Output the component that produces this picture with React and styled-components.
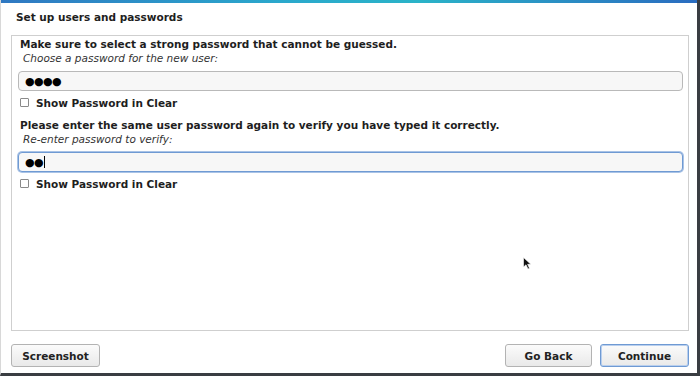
import styled, { createGlobalStyle } from "styled-components";

const GlobalStyle = createGlobalStyle`
  html, body {
    margin: 0;
    padding: 0;
    background: #ffffff;
  }
  body {
    font-family: "DejaVu Sans", "Liberation Sans", sans-serif;
    color: #1e1e1e;
  }
`;

const Window = styled.div`
  position: relative;
  box-sizing: border-box;
  width: 700px;
  height: 376px;
  display: flex;
  flex-direction: column;
  background: #ffffff;
  border-left: 1px solid #d8d8d8;
  border-right: 3px solid #3a3d42;
  border-bottom: 3px solid #3a3d42;
  &::before {
    content: "";
    display: block;
    height: 3px;
    background: linear-gradient(90deg, #2f78c2 0%, #2aa8cc 40%, #2ab3c8 60%, #2a6cc0 100%);
  }
`;

const Title = styled.h1`
  margin: 0;
  padding: 8px 0 0 15px;
  height: 24px;
  font-size: 10.5px;
  font-weight: bold;
  line-height: 13px;
`;

const Panel = styled.section`
  flex: 1;
  margin: 0 8px 0 10px;
  border: 1px solid #cfcfcf;
  padding: 2px 5px 0 6px;
  display: flex;
  flex-direction: column;
`;

const Heading = styled.div`
  font-size: 10.5px;
  font-weight: bold;
  line-height: 13px;
  padding-left: 2px;
  margin-top: ${(p) => p.$top || 0}px;
`;

const Hint = styled.div`
  font-size: 10.5px;
  font-style: italic;
  line-height: 13px;
  color: #333;
  padding: 1px 0 0 5px;
  margin-bottom: 6px;
`;

const Field = styled.div`
  box-sizing: border-box;
  height: 20px;
  border: 1px solid ${(p) => (p.$focus ? "#6f9ad3" : "#b9b9b9")};
  box-shadow: ${(p) => (p.$focus ? "0 0 0 1px #a9c3e6" : "none")};
  border-radius: 4px;
  background: #f7f7f7;
  display: flex;
  align-items: center;
  padding-left: 6px;
  font-size: 11px;
  letter-spacing: -0.6px;
  color: #000;
`;

const Caret = styled.span`
  display: inline-block;
  width: 1px;
  height: 12px;
  margin-left: 1px;
  background: #000;
`;

const CheckRow = styled.label`
  display: flex;
  align-items: center;
  gap: 7px;
  height: 21px;
  margin-top: 1px;
  padding-left: 2px;
  font-size: 10.5px;
  font-weight: bold;
`;

const Box = styled.span`
  box-sizing: border-box;
  width: 9px;
  height: 9px;
  border: 1px solid #8a8a8a;
  border-radius: 1px;
  background: #fff;
`;

const Footer = styled.footer`
  box-sizing: border-box;
  height: 42px;
  display: flex;
  align-items: flex-end;
  padding: 0 8px 6px 10px;
  gap: 8px;
`;

const Spacer = styled.div`
  flex: 1;
`;

const Button = styled.button`
  box-sizing: border-box;
  width: ${(p) => p.$w}px;
  height: 23px;
  border: 1px solid ${(p) => (p.$focus ? "#6f9ad3" : "#b3b3b3")};
  box-shadow: ${(p) => (p.$focus ? "inset 0 0 0 1px #b9cfee" : "none")};
  border-radius: 3px;
  background: linear-gradient(#fbfbfb, #e9e9e9);
  font-family: "DejaVu Sans", "Liberation Sans", sans-serif;
  font-size: 10.5px;
  font-weight: bold;
  color: #222;
  padding: 0;
`;

const Pointer = styled.svg`
  position: absolute;
  left: 522px;
  top: 257px;
`;

export default function App() {
  return (
    <>
      <GlobalStyle />
      <Window>
        <Title>Set up users and passwords</Title>
        <Panel>
          <Heading>Make sure to select a strong password that cannot be guessed.</Heading>
          <Hint>Choose a password for the new user:</Hint>
          <Field>●●●●</Field>
          <CheckRow>
            <Box />
            Show Password in Clear
          </CheckRow>
          <Heading $top={6}>
            Please enter the same user password again to verify you have typed it correctly.
          </Heading>
          <Hint>Re-enter password to verify:</Hint>
          <Field $focus>
            ●●
            <Caret />
          </Field>
          <CheckRow>
            <Box />
            Show Password in Clear
          </CheckRow>
        </Panel>
        <Footer>
          <Button $w={89}>Screenshot</Button>
          <Spacer />
          <Button $w={87}>Go Back</Button>
          <Button $focus $w={89}>
            Continue
          </Button>
        </Footer>
        <Pointer width="9" height="13" viewBox="0 0 9 13">
          <path d="M0.5 0.5 L0.5 10 L3 7.8 L5 12 L6.5 11.3 L4.6 7.3 L7.8 7.3 Z" fill="#111" stroke="#fff" strokeWidth="0.6" />
        </Pointer>
      </Window>
    </>
  );
}
